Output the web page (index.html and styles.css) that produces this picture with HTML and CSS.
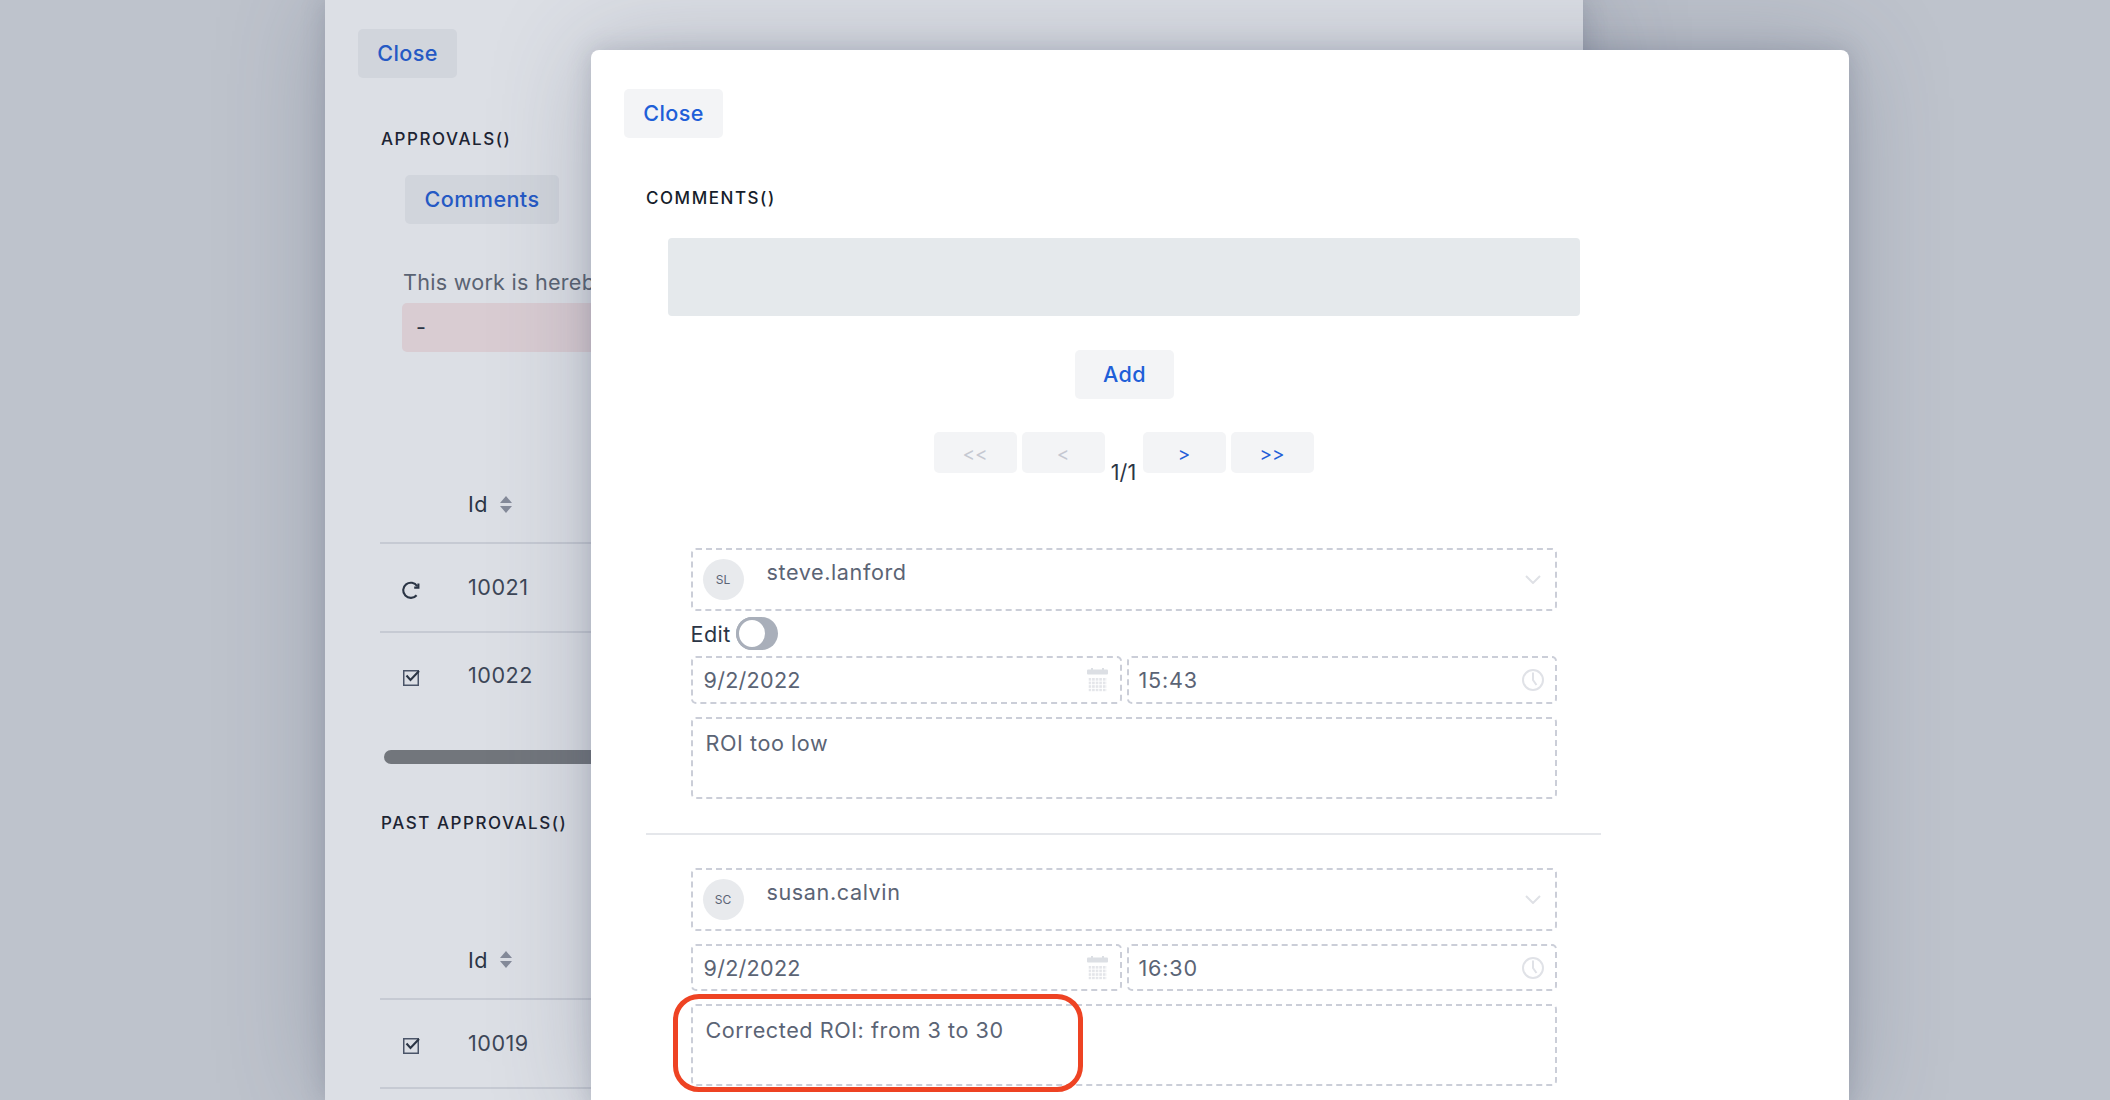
FILE: index.html
```html
<!DOCTYPE html>
<html lang="en">
<head>
    <meta charset="UTF-8">
    <meta name="viewport" content="width=device-width, initial-scale=1.0">
    <title>Approvals</title>
    <link rel="stylesheet" href="styles.css">
</head>
<body>
    <!-- Approvals panel, sits behind the comments modal -->
    <div class="panel">
        <button class="btn btn-back">Close</button>
        <h2 class="heading heading-back">Approvals()</h2>
        <button class="btn btn-back btn-comments">Comments</button>
        <p class="notice">This work is hereby approved</p>
        <div class="alert">-</div>

        <div class="table table-first">
            <div class="row row-head">
                <span class="cell-id">Id</span>
                <svg class="sort" viewBox="0 0 12 17"><path d="M6 0l6 7H0zM6 17l6-7H0z"/></svg>
            </div>
            <div class="row">
                <svg class="row-icon icon-reload" viewBox="0 0 18 18"><path d="M14.6 14.2A7.6 7.6 0 1 1 15.2 5.2"/><path d="M16.4 2.4V6.6H12.2"/></svg>
                <span class="cell-id">10021</span>
            </div>
            <div class="row row-last">
                <svg class="row-icon" viewBox="0 0 18 18"><rect class="check-box" x="1.75" y="0.75" width="14.5" height="14.5"/><path d="M4.5 5.5l4 4.5L17 1"/></svg>
                <span class="cell-id">10022</span>
            </div>
        </div>
        <div class="scrollbar"></div>

        <h2 class="heading heading-past">Past approvals()</h2>
        <div class="table">
            <div class="row row-head row-head-past">
                <span class="cell-id">Id</span>
                <svg class="sort" viewBox="0 0 12 17"><path d="M6 0l6 7H0zM6 17l6-7H0z"/></svg>
            </div>
            <div class="row">
                <svg class="row-icon" viewBox="0 0 18 18"><rect class="check-box" x="1.75" y="0.75" width="14.5" height="14.5"/><path d="M4.5 5.5l4 4.5L17 1"/></svg>
                <span class="cell-id">10019</span>
            </div>
        </div>
    </div>

    <!-- Comments modal -->
    <div class="modal">
        <button class="btn">Close</button>
        <div class="comments">
            <h2 class="heading">Comments()</h2>
            <div class="new-comment"></div>
            <div class="center"><button class="btn btn-add">Add</button></div>
            <div class="pager">
                <button class="btn page-btn disabled">&lt;&lt;</button>
                <button class="btn page-btn disabled">&lt;</button>
                <span class="page-count">1/1</span>
                <button class="btn page-btn">&gt;</button>
                <button class="btn page-btn">&gt;&gt;</button>
            </div>

            <div class="comment comment-first">
                <div class="field user">
                    <span class="avatar">SL</span>
                    <span class="user-name">steve.lanford</span>
                    <svg class="chevron" viewBox="0 0 16 9"><path d="M1 1l7 7 7-7"/></svg>
                </div>
                <div class="edit-row">
                    <span>Edit</span>
                    <span class="toggle"><span class="knob"></span></span>
                </div>
                <div class="date-row">
                    <div class="field date">
                        <span>9/2/2022</span>
                        <svg class="calendar" viewBox="0 0 21 24"><use href="#cal"/></svg>
                    </div>
                    <div class="field time">
                        <span>15:43</span>
                        <svg class="clock" viewBox="0 0 22 22"><circle cx="11" cy="11" r="10"/><path d="M11 3.5V11l3.5 5"/></svg>
                    </div>
                </div>
                <div class="field text-box">ROI too low</div>
            </div>

            <hr class="divider">

            <div class="comment">
                <div class="field user">
                    <span class="avatar">SC</span>
                    <span class="user-name">susan.calvin</span>
                    <svg class="chevron" viewBox="0 0 16 9"><path d="M1 1l7 7 7-7"/></svg>
                </div>
                <div class="date-row date-row-second">
                    <div class="field date">
                        <span>9/2/2022</span>
                        <svg class="calendar" viewBox="0 0 21 24"><use href="#cal"/></svg>
                    </div>
                    <div class="field time">
                        <span>16:30</span>
                        <svg class="clock" viewBox="0 0 22 22"><circle cx="11" cy="11" r="10"/><path d="M11 3.5V11l3.5 5"/></svg>
                    </div>
                </div>
                <div class="field text-box highlighted">
                    Corrected ROI: from 3 to 30
                    <span class="marker"></span>
                </div>
            </div>
        </div>
    </div>

    <svg class="defs" width="0" height="0">
        <defs>
            <pattern id="cal-dots" width="3.6" height="3.6" patternUnits="userSpaceOnUse" x="1.5" y="10">
                <rect width="2.6" height="2.6" fill="#e3e5e9"/>
            </pattern>
            <g id="cal">
                <rect x="0" y="1.5" width="21" height="5" rx="1" fill="#dcdfe4"/>
                <rect x="4" y="0" width="2" height="3" fill="#dcdfe4"/>
                <rect x="15" y="0" width="2" height="3" fill="#dcdfe4"/>
                <rect x="1.5" y="10" width="18" height="13.4" fill="url(#cal-dots)"/>
            </g>
        </defs>
    </svg>
</body>
</html>
```

FILE: styles.css
```css
* {
    box-sizing: border-box;
}
html, body {
    height: 1100px;
    overflow: hidden;
}
body {
    margin: 0;
    background-color: #bec3cc;
    font-family: Inter, "Liberation Sans", sans-serif;
    font-size: 21.6px;
    color: #2b3545;
}
button {
    font-family: inherit;
    border: none;
    cursor: pointer;
}

/* back panel */
.panel {
    margin-left: 325px;
    width: 1258px;
    height: 1100px;
    padding: 29px 0 0 33px;
    background-color: #dcdfe5;
    box-shadow: 0 0 100px rgba(60, 70, 95, 0.26), 0 0 24px rgba(60, 70, 95, 0.2);
    overflow: hidden;
}
.btn {
    display: block;
    width: 99px;
    height: 49px;
    padding: 0 0 2px;
    border-radius: 5px;
    background-color: #f3f4f6;
    color: #1f5fd8;
    font-size: 21.6px;
    font-weight: 500;
    letter-spacing: 0.4px;
}
.btn-back {
    background-color: #d1d5dc;
    color: #2559c4;
}
.heading {
    margin: 0;
    height: 22px;
    line-height: 22px;
    font-size: 17px;
    font-weight: 500;
    letter-spacing: 1.55px;
    text-transform: uppercase;
    color: #161d2b;
}
.heading-back {
    margin: 50px 0 0 23px;
    color: #1d2433;
}
.btn-comments {
    margin: 25px 0 0 47px;
    width: 154px;
}
.notice {
    margin: 42px 0 0 45px;
    line-height: 32px;
    letter-spacing: 0.25px;
    color: #5a6373;
}
.alert {
    margin: 5px 0 0 44px;
    width: 600px;
    height: 49px;
    line-height: 49px;
    padding-left: 14px;
    border-radius: 5px;
    background-color: #d9ccd2;
    color: #2b3545;
}
.table {
    margin-left: 22px;
    width: 1100px;
}
.table-first {
    margin-top: 114px;
}
.row {
    display: flex;
    align-items: center;
    height: 89px;
    padding-bottom: 2px;
    border-bottom: 2px solid #c6cad3;
}
.row-head {
    height: 78px;
    padding-bottom: 0;
    padding-left: 88px;
}
.row-head-past {
    height: 79px;
}
.row-last {
    height: 86px;
    border-bottom: none;
}
.cell-id {
    letter-spacing: 0.5px;
    color: #3c4657;
}
.row-head .cell-id {
    letter-spacing: 0.4px;
    color: #2b3545;
}
.sort {
    width: 12px;
    height: 17px;
    margin-left: 12px;
    fill: #858b9a;
}
.row-icon {
    width: 18px;
    height: 18px;
    margin: 8px 48px 0 22px;
    overflow: visible;
    fill: none;
    stroke: #2b3545;
    stroke-width: 2.1;
}
.icon-reload {
    margin-top: 7px;
}
.check-box {
    stroke: #4a5468;
    stroke-width: 1.5;
}
.scrollbar {
    margin: 31px 0 0 26px;
    width: 600px;
    height: 14px;
    border-radius: 7px;
    background-color: #72767c;
}
.heading-past {
    margin: 48px 0 87px 23px;
    color: #1d2433;
}

/* comments modal */
.modal {
    position: absolute;
    left: 591px;
    top: 50px;
    width: 1258px;
    height: 1060px;
    padding: 39px 0 0 33px;
    border-radius: 8px;
    background-color: #fff;
    box-shadow: 0 0 100px rgba(60, 70, 95, 0.26), 0 0 24px rgba(60, 70, 95, 0.2);
}
.comments {
    margin: 49px 0 0 22px;
    width: 955px;
}
.new-comment {
    margin: 29px 0 0 21.5px;
    width: 912.5px;
    height: 78px;
    border-radius: 4px;
    background-color: #e5e9ec;
}
.center {
    display: flex;
    justify-content: center;
    margin-top: 34px;
}
.btn-add {
    margin-left: 2px;
}
.pager {
    display: flex;
    justify-content: center;
    align-items: flex-start;
    gap: 5px;
    height: 41px;
    margin-top: 33px;
}
.page-btn {
    width: 83px;
    height: 41px;
    font-size: 19px;
    font-weight: 400;
    letter-spacing: 0;
    padding: 4px 0 0;
}
.disabled {
    color: #c5c8d1;
}
.page-count {
    width: 28px;
    margin-top: 24px;
    line-height: 32px;
    text-align: center;
    white-space: nowrap;
}
.comment {
    position: relative;
    margin-left: 44.5px;
    width: 866px;
}
.comment-first {
    margin-top: 75px;
}
.field {
    border: 2px dashed #cbced8;
    border-radius: 5px;
    color: #5b6475;
}
.user {
    display: flex;
    align-items: center;
    height: 63px;
    padding: 0 14px 0 10px;
}
.avatar {
    display: flex;
    align-items: center;
    justify-content: center;
    width: 41px;
    height: 41px;
    margin-top: -1px;
    border-radius: 50%;
    background-color: #e8eaed;
    font-size: 12px;
}
.user-name {
    margin: -16px 0 0 23px;
    letter-spacing: 0.6px;
}
.chevron, .calendar, .clock {
    margin-left: auto;
    flex: none;
}
.chevron {
    width: 16px;
    height: 9px;
    fill: none;
    stroke: #dfe1e6;
    stroke-width: 2;
}
.edit-row {
    display: flex;
    align-items: center;
    gap: 5px;
    height: 33px;
    margin: 6px 0;
    letter-spacing: 0.4px;
}
.toggle {
    width: 42px;
    height: 33px;
    border-radius: 17px;
    background-color: #a9afba;
}
.knob {
    display: block;
    width: 32px;
    height: 33px;
    border-radius: 50%;
    border: 3px solid #a9afba;
    background-color: #fff;
}
.date-row {
    display: flex;
    gap: 5px;
}
.date-row-second {
    margin-top: 13px;
}
.date-row .field {
    display: flex;
    align-items: center;
    height: 48px;
    letter-spacing: 0.25px;
}
.date-row-second .field {
    height: 47px;
}
.date {
    width: 431px;
    padding: 0 12px 0 11px;
}
.time {
    width: 430px;
    padding: 0 11px 0 10px;
}
.time span {
    letter-spacing: 0.8px;
}
.calendar {
    width: 21px;
    height: 24px;
}
.clock {
    width: 22px;
    height: 22px;
    fill: none;
    stroke: #e0e2e7;
    stroke-width: 2;
}
.text-box {
    position: relative;
    height: 82px;
    margin-top: 13px;
    padding: 10px 0 0 13px;
    line-height: 28px;
    letter-spacing: 0.56px;
}
/* red annotation drawn over the screenshot */
.marker {
    position: absolute;
    left: -20px;
    top: -12px;
    width: 410px;
    height: 98px;
    border: 5px solid #ee4323;
    border-radius: 26px;
}
.divider {
    height: 2px;
    margin: 34px 0 33px;
    border: none;
    background-color: #e5e7eb;
}
.defs {
    position: absolute;
}
```
